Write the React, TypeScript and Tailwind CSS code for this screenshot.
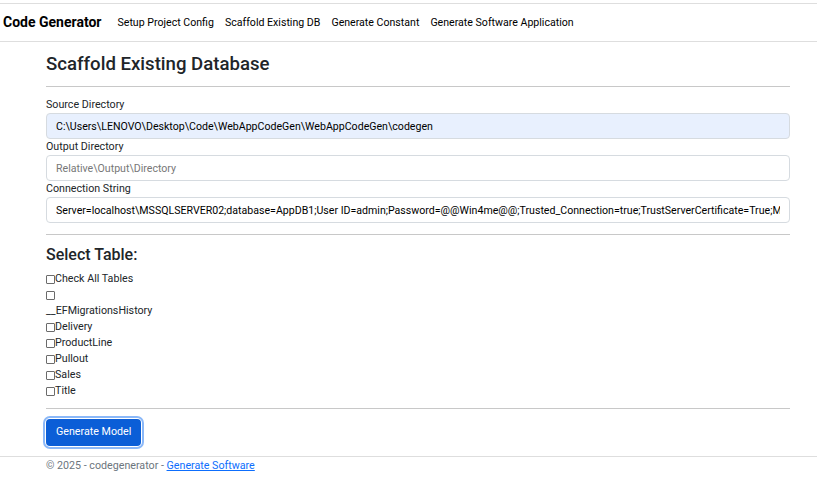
import React from 'react'

const tables = ['Delivery', 'ProductLine', 'Pullout', 'Sales', 'Title']

function Box() {
  return (
    <input
      type="checkbox"
      className="m-0 h-[9px] w-[9px] appearance-none rounded-[1px] border border-[#6b6b6b] bg-white"
    />
  )
}

export default function App() {
  return (
    <div className="min-h-screen bg-white pt-[3px] font-['Roboto',sans-serif] text-[10.7px] text-[#212529]">
      <header className="border-y border-[#dedede]">
        <nav className="flex h-[37px] items-center pl-[3px]">
          <a className="mr-[16px] text-[14px] font-bold text-black">Code Generator</a>
          <ul className="flex items-center gap-[11px] text-[10.6px] text-black">
            <li>Setup Project Config</li>
            <li>Scaffold Existing DB</li>
            <li>Generate Constant</li>
            <li>Generate Software Application</li>
          </ul>
        </nav>
      </header>

      <main className="mx-[46px] mr-[27px]">
        <h2 className="pt-[10px] text-[18.6px] font-medium leading-[24px] text-[#212529]">
          Scaffold Existing Database
        </h2>
        <hr className="mt-[10px] border-[#c8c8c8]" />

        <div className="mt-[10px] flex flex-col">
          <label className="leading-[16px]">Source Directory</label>
          <input
            readOnly
            value="C:\Users\LENOVO\Desktop\Code\WebAppCodeGen\WebAppCodeGen\codegen"
            className="h-[26px] rounded-[4px] border border-[#d6dbe0] bg-[#e8f0fe] px-[9px] text-[10.6px] text-black outline-none"
          />
          <label className="leading-[16px]">Output Directory</label>
          <input
            placeholder="Relative\Output\Directory"
            className="h-[26px] rounded-[4px] border border-[#d6dbe0] bg-white px-[9px] text-[10.6px] text-black outline-none placeholder:text-[#777]"
          />
          <label className="leading-[16px]">Connection String</label>
          <input
            readOnly
            value="Server=localhost\MSSQLSERVER02;database=AppDB1;User ID=admin;Password=@@Win4me@@;Trusted_Connection=true;TrustServerCertificate=True;MultipleActiveResultSets=true"
            className="h-[26px] rounded-[4px] border border-[#d6dbe0] bg-white px-[9px] text-[10.6px] text-black outline-none"
          />
        </div>
        <hr className="mt-[11px] border-[#c8c8c8]" />

        <h3 className="mt-[9px] text-[16px] font-medium leading-[22px]">Select Table:</h3>
        <div className="mt-[5px] flex flex-col leading-[16px]">
          <label className="flex items-center">
            <Box />
            Check All Tables
          </label>
          <div className="flex h-[16px] items-center">
            <Box />
          </div>
          <div>__EFMigrationsHistory</div>
          {tables.map((t) => (
            <label key={t} className="flex items-center">
              <Box />
              {t}
            </label>
          ))}
        </div>
        <hr className="mt-[9px] border-[#c8c8c8]" />

        <button className="mt-[10px] mb-[10px] h-[27px] rounded-[4px] bg-[#0b5ed7] px-[10px] text-white ring-[2px] ring-[#8bb8f8] ring-offset-[1px]">
          Generate Model
        </button>
      </main>

      <footer className="border-t border-[#dedede] px-[46px] pt-[1px] text-[#6c757d]">
        © 2025 - codegenerator - <a className="text-[#0d6efd] underline">Generate Software</a>
      </footer>
    </div>
  )
}
